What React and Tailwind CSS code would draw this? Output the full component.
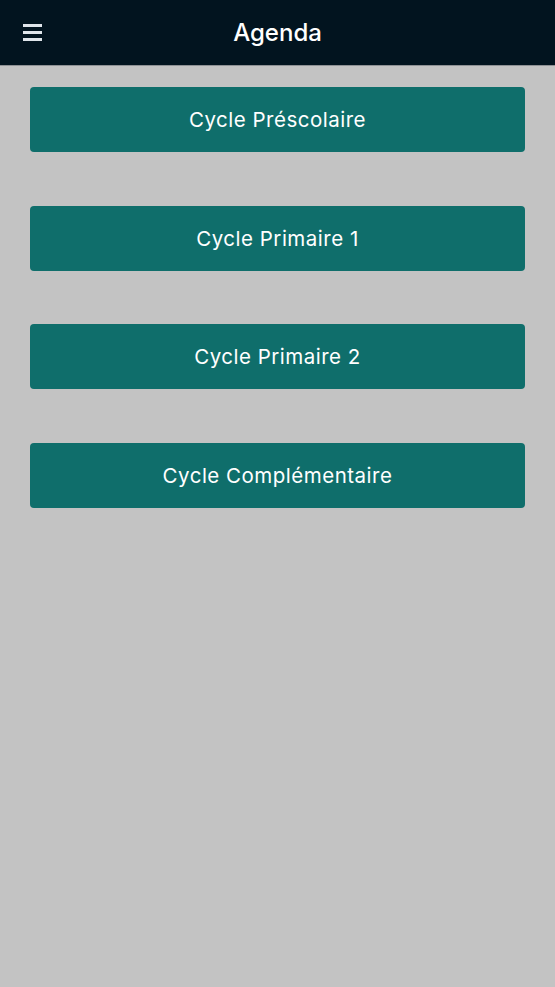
export default function App() {
  const cycles = [
    "Cycle Préscolaire",
    "Cycle Primaire 1",
    "Cycle Primaire 2",
    "Cycle Complémentaire",
  ];

  return (
    <div className="min-h-[987px] bg-[#c3c3c3] font-['Inter','Noto_Sans',sans-serif]">
      {/* Top bar */}
      <header className="relative flex h-[66px] items-center justify-center border-b border-[#8e9194] bg-[#02141f]">
        <button className="absolute left-[23px] top-[24px] flex w-[19px] flex-col gap-[4px]">
          <span className="h-[3px] w-full bg-[#dfe5ea]"></span>
          <span className="h-[3px] w-full bg-[#dfe5ea]"></span>
          <span className="h-[3px] w-full bg-[#dfe5ea]"></span>
        </button>
        <h1 className="text-[24px] font-medium text-white">Agenda</h1>
      </header>

      {/* Cycle list */}
      <div className="flex flex-col gap-[53.5px] px-[30px] pt-[21px]">
        {cycles.map((c) => (
          <button
            key={c}
            className="flex h-[65px] w-full items-center justify-center rounded-[4px] bg-[#0f6e6b] pt-[2px] text-[20.5px] tracking-[0.5px] text-white"
          >
            {c}
          </button>
        ))}
      </div>
    </div>
  );
}
